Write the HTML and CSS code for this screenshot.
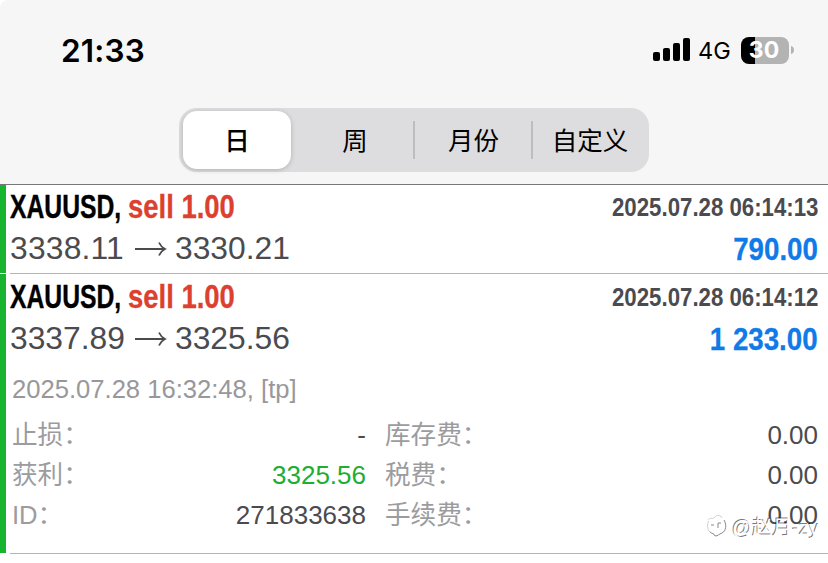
FILE: index.html
```html
<!DOCTYPE html>
<html lang="zh-CN">
<head>
<meta charset="utf-8">
<title>历史</title>
<link rel="stylesheet" href="styles.css">
</head>
<body>
<main class="screen">
  <header class="top">
    <div class="status">
      <span class="clock">21:33</span>
      <div class="indicators">
        <svg class="signal" width="38" height="24" viewBox="0 0 38 24"><rect x="0" y="14" width="7" height="9" rx="2"/><rect x="10" y="10" width="7" height="13" rx="2"/><rect x="20" y="5" width="7" height="18" rx="2"/><rect x="30" y="0" width="7" height="23" rx="2"/></svg>
        <span class="network">4G</span>
        <div class="battery"><span class="level">30</span></div>
        <svg class="cap" width="3" height="8" viewBox="0 0 3 8"><path d="M0 0C4 1 4 7 0 8Z"/></svg>
      </div>
    </div>
    <nav class="segments">
      <span class="segment active">日</span>
      <span class="segment week">周</span>
      <span class="segment divided">月份</span>
      <span class="segment divided">自定义</span>
    </nav>
  </header>

  <article class="deal">
    <div class="line title"><b class="symbol"><span>XAUUSD,</span></b><b class="side"><span>sell 1.00</span></b><b class="date"><span>2025.07.28 06:14:13</span></b></div>
    <div class="line prices"><span class="open first">3338.11</span><svg class="arrow" width="32" height="18" viewBox="0 0 32 18"><path d="M0 9H30M24 2.500Q26 7 30 9Q26 11 24 15.500"/></svg><span>3330.21</span><b class="profit"><span>790.00</span></b></div>
  </article>

  <article class="deal expanded">
    <div class="line title"><b class="symbol"><span>XAUUSD,</span></b><b class="side"><span>sell 1.00</span></b><b class="date"><span>2025.07.28 06:14:12</span></b></div>
    <div class="line prices"><span class="open">3337.89</span><svg class="arrow" width="32" height="18" viewBox="0 0 32 18"><path d="M0 9H30M24 2.500Q26 7 30 9Q26 11 24 15.500"/></svg><span>3325.56</span><b class="profit"><span>1 233.00</span></b></div>
    <p class="closed">2025.07.28 16:32:48, [tp]</p>
    <div class="details">
      <span class="label">止损：</span><span class="value">-</span><span class="label second">库存费：</span><span class="value">0.00</span>
      <span class="label">获利：</span><span class="value gain">3325.56</span><span class="label second">税费：</span><span class="value">0.00</span>
      <span class="label">ID：</span><span class="value">271833638</span><span class="label second">手续费：</span><span class="value">0.00</span>
    </div>
  </article>

  <div class="watermark">
    <svg width="22" height="24" viewBox="0 0 22 24"><path class="shine" d="M3 7C1 9 1 16 4 18M2 6C4 3 6 5 8 4C11 0 15 1 16 4"/><path class="shade" d="M4 18C6 20 8 19 9 22C12 22 13 20 16 19C20 17 21 11 18 6M5 11h3M12 9v5M12 9h3"/></svg>
    <span>@赵月-zy</span>
  </div>
</main>
</body>
</html>
```
FILE: styles.css
```css
* { box-sizing: border-box; }
body {
  margin: 0;
  background: #fff;
  color: #4b4b4f;
  font-family: "Liberation Sans", "Noto Sans CJK SC", sans-serif;
}
.screen {
  position: relative;
  width: 828px;
  height: 563px;
  overflow: hidden;
}
.top {
  height: 185px;
  background: linear-gradient(#18b42f, #18b42f) 0 100% / 6px 1px no-repeat border-box, #f6f6f6;
  border-bottom: 1px solid #77777a;
  border-top-left-radius: 8px;
}
.status {
  display: flex;
  justify-content: space-between;
  align-items: center;
  height: 108px;
  padding: 0 34px 8px 61px;
  color: #000;
  font-family: Inter, sans-serif;
}
.clock { font-size: 31.500px; font-weight: 600; letter-spacing: 0.2px; }
.indicators { display: flex; align-items: center; }
.network { margin-left: 7px; width: 34px; font-size: 23.500px; }
.battery {
  width: 48px;
  height: 27px;
  margin-left: 9px;
  border-radius: 8px;
  background: linear-gradient(90deg, #000 14px, #b3b3b4 14px);
  color: #fff;
  text-align: center;
  line-height: 27px;
  font-size: 23px;
  font-weight: 700;
}
.level { display: block; margin-left: -2px; }
.cap { margin-left: 2px; fill: #b3b3b4; }
.segments {
  display: grid;
  grid-template-columns: 110px 121px 118px 115px;
  width: 470px;
  height: 64px;
  margin-left: 179px;
  padding: 3px;
  border-radius: 18px;
  background: #dddddf;
  color: #000;
  font-family: "Noto Sans CJK SC", sans-serif;
}
.segment {
  display: flex;
  align-items: center;
  justify-content: center;
  height: 58px;
  padding-bottom: 4px;
  padding-left: 3px;
  font-size: 25.500px;
}
.week { padding-left: 5px; }
.active {
  margin-left: 1px;
  margin-right: 1px;
  padding-left: 0;
  border-radius: 14px;
  background: #fff;
  box-shadow: 0 1px 5px #0003;
  font-weight: 500;
}
.divided {
  background: linear-gradient(#bdbdc0, #bdbdc0) 0 50% / 2px 38px no-repeat;
}
.deal {
  height: 89px;
  padding: 2px 10px 0;
  background:
    linear-gradient(#18b42f, #18b42f) 0 0 / 6px calc(100% - 1px) no-repeat,
    linear-gradient(#b5b5b7, #b5b5b7) 10px 100% / 100% 1px no-repeat;
}
.expanded { height: 280px; padding-top: 3px; }
.deal .line { display: flex; align-items: center; white-space: nowrap; }
.title { height: 40px; }
.title span, .profit span { display: block; transform-origin: 0 50%; }
.symbol { width: 118px; color: #000; font-size: 32.500px; -webkit-text-stroke: 0.4px; }
.symbol span { transform: scaleX(0.76); }
.side { width: 107px; color: #dc402e; font-size: 32.500px; -webkit-text-stroke: 0.3px; }
.side span { transform: scaleX(0.845); }
.date { width: 206px; margin-left: auto; font-size: 25.500px; }
.date span { width: 207px; transform: scaleX(0.872); }
.prices { height: 43px; font-size: 31.800px; }
.open { width: 125px; }
.first { letter-spacing: 0.2px; }
.arrow { width: 32px; margin-right: 8px; fill: none; stroke: #4b4b4f; stroke-width: 1.800; }
.profit {
  display: flex;
  justify-content: flex-end;
  margin-left: auto;
  padding-top: 1px;
  color: #107ae8;
  font-size: 32px;
  -webkit-text-stroke: 0.3px;
}
.profit span { transform: scaleX(0.865); transform-origin: 100% 50%; }
.closed {
  height: 54px;
  margin: 0 0 0 2px;
  color: #98989b;
  font-size: 25.600px;
  line-height: 58px;
}
.details {
  display: grid;
  grid-template-columns: 100px 255px 120px 1fr;
  grid-auto-rows: 40px;
  padding: 1px 0 0 1px;
  line-height: 40px;
  font-size: 26px;
  white-space: nowrap;
}
.label { padding-left: 1px; color: #9c9c9f; font-size: 25.600px; }
.value { text-align: right; }
.second { padding-left: 19px; }
.gain { color: #20ad32; }
.watermark {
  position: absolute;
  left: 706px;
  top: 513px;
  display: flex;
  align-items: center;
  gap: 4px;
  height: 26px;
  color: #fff;
  font-size: 20px;
  white-space: nowrap;
  text-shadow: -1px -1px 0 #0008;
}
.shade { fill: none; stroke: #88888b; stroke-width: 1; }
.shine { fill: none; stroke: #d0d0d2; stroke-width: 1; }
```
